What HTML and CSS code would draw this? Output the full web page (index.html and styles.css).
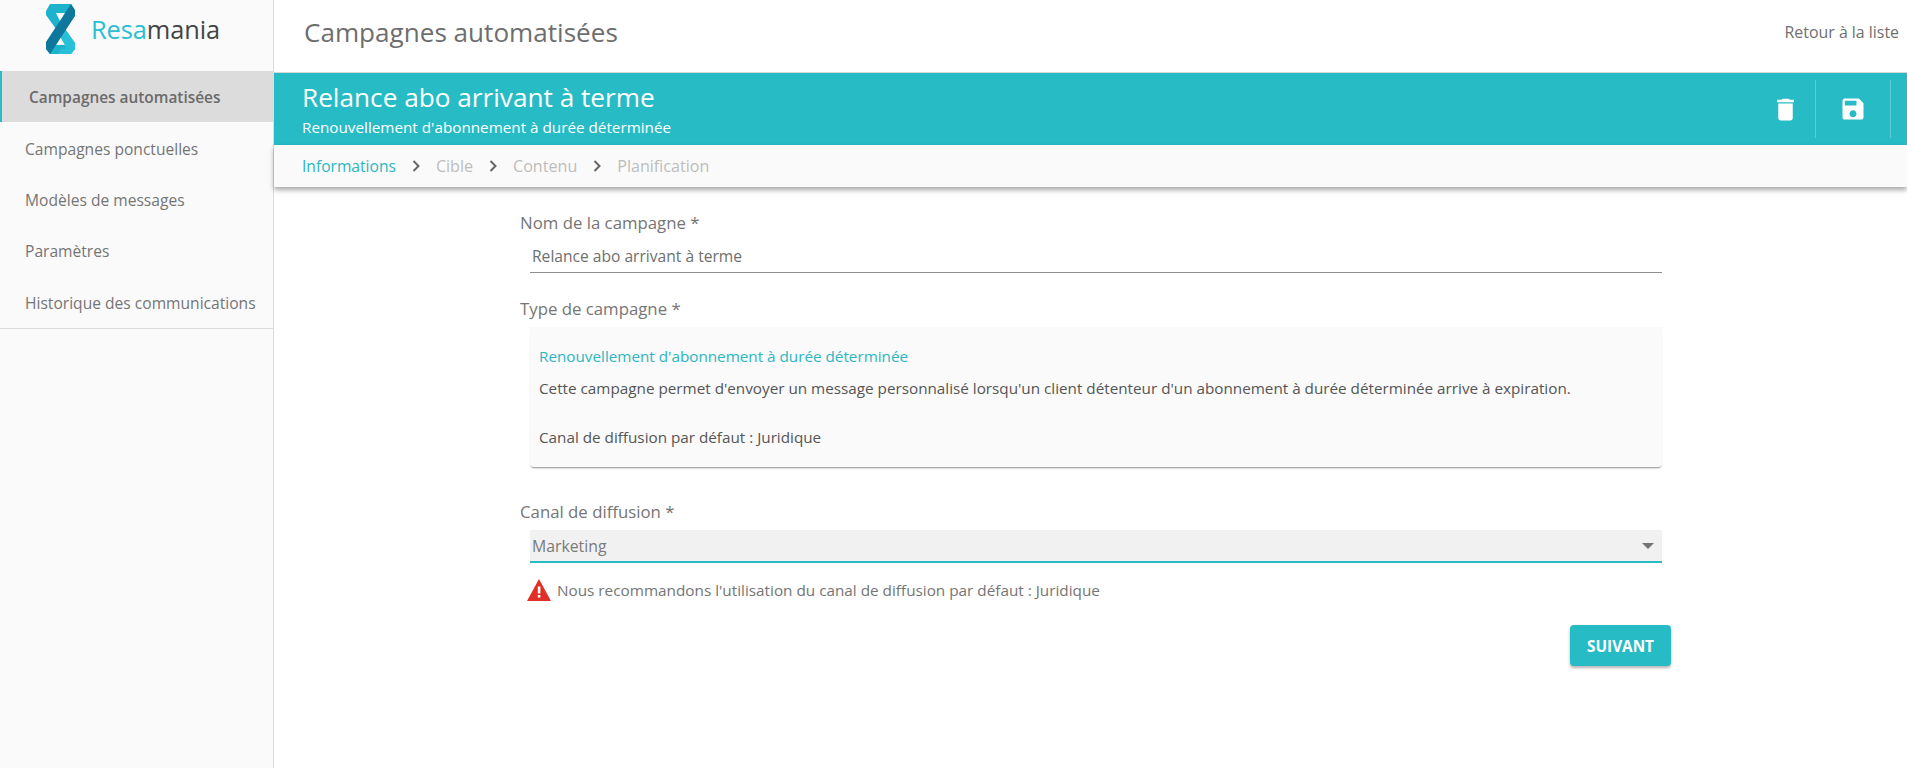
FILE: index.html
```html
<!DOCTYPE html>
<html lang="fr">
<head>
<meta charset="utf-8">
<title>Campagnes automatisées</title>
<link rel="stylesheet" href="styles.css">
</head>
<body>
<div class="app">
  <aside class="sidebar">
    <div class="logo">
      <svg class="logo-mark" width="29" height="50" viewBox="0 0 29 50">
        <path d="M4 0 H25 L29 7 V11 L19 25 L29 39 V45 L25 50 H4 L0 45 V39 L10 25 L0 11 V7 Z M10 9 L14.5 18 L19 9 Z M14.5 33 L10 41 H19 Z" fill="#1db3cd" fill-rule="evenodd"/>
        <path d="M14.5 33 L19 25 L29 39 V45 L25 50 H12 L15 45 H19 V41 Z" fill="#27c0d8"/>
        <path d="M25 0 L29 6 V12 L4 50 L0 45 V38 Z" fill="#0d789b"/>
      </svg>
      <div class="logo-text"><span class="logo-a">Resa</span><span class="logo-b">mania</span></div>
    </div>
    <nav class="nav">
      <a class="nav-item active">Campagnes automatisées</a>
      <a class="nav-item">Campagnes ponctuelles</a>
      <a class="nav-item">Modèles de messages</a>
      <a class="nav-item">Paramètres</a>
      <a class="nav-item">Historique des communications</a>
    </nav>
  </aside>
  <main class="main">
    <header class="topbar">
      <h1 class="page-title">Campagnes automatisées</h1>
      <a class="back">Retour à la liste</a>
    </header>
    <section class="banner">
      <div class="banner-text">
        <div class="banner-title">Relance abo arrivant à terme</div>
        <div class="banner-sub">Renouvellement d'abonnement à durée déterminée</div>
      </div>
      <div class="banner-actions">
        <button class="icon-btn trash" aria-label="Supprimer">
          <svg width="29" height="29" viewBox="0 0 24 24" fill="#fff"><path d="M6 19c0 1.1.9 2 2 2h8c1.1 0 2-.9 2-2V7H6v12zM19 4h-3.5l-1-1h-5l-1 1H5v2h14V4z"/></svg>
        </button>
        <button class="icon-btn save" aria-label="Enregistrer">
          <svg width="28" height="28" viewBox="0 0 24 24" fill="#fff"><path d="M17 3H5c-1.11 0-2 .9-2 2v14c0 1.1.89 2 2 2h14c1.1 0 2-.9 2-2V7l-4-4zm-5 16c-1.66 0-3-1.34-3-3s1.34-3 3-3 3 1.34 3 3-1.34 3-3 3zm3-10H5V5h10v4z"/></svg>
        </button>
      </div>
    </section>
    <div class="steps">
      <span class="step current">Informations</span>
      <svg class="chev" width="8" height="12" viewBox="0 0 8 12"><path d="M1.5 1 L6.5 6 L1.5 11" fill="none" stroke="#666" stroke-width="2"/></svg>
      <span class="step">Cible</span>
      <svg class="chev" width="8" height="12" viewBox="0 0 8 12"><path d="M1.5 1 L6.5 6 L1.5 11" fill="none" stroke="#666" stroke-width="2"/></svg>
      <span class="step">Contenu</span>
      <svg class="chev" width="8" height="12" viewBox="0 0 8 12"><path d="M1.5 1 L6.5 6 L1.5 11" fill="none" stroke="#666" stroke-width="2"/></svg>
      <span class="step">Planification</span>
    </div>
    <form class="form">
      <div class="label first">Nom de la campagne *</div>
      <div class="input">Relance abo arrivant à terme</div>
      <div class="label second">Type de campagne *</div>
      <div class="card">
        <div class="card-title">Renouvellement d'abonnement à durée déterminée</div>
        <p class="card-desc">Cette campagne permet d'envoyer un message personnalisé lorsqu'un client détenteur d'un abonnement à durée déterminée arrive à expiration.</p>
        <p class="card-channel">Canal de diffusion par défaut : Juridique</p>
      </div>
      <div class="label third">Canal de diffusion *</div>
      <div class="select"><span>Marketing</span><i class="caret"></i></div>
      <div class="warning">
        <svg width="24" height="22" viewBox="0 0 24 22"><path d="M12 0 L24 22 H0 Z" fill="#e02f26"/><rect x="10.8" y="7.5" width="2.6" height="7" fill="#fff"/><rect x="10.8" y="16" width="2.6" height="2.6" fill="#fff"/></svg>
        <span>Nous recommandons l'utilisation du canal de diffusion par défaut : Juridique</span>
      </div>
      <div class="actions"><button type="button" class="next">SUIVANT</button></div>
    </form>
  </main>
</div>
</body>
</html>
```
FILE: styles.css
```css
* { box-sizing: border-box; }
html, body { margin: 0; height: 100%; }
body { font-family: "Open Sans", "Noto Sans", sans-serif; color: #6f6f6f; background: #fff; overflow: hidden; }
.app { display: flex; height: 768px; }
.sidebar { width: 274px; flex: none; background: #fafafa; border-right: 1px solid #dcdcdc; }
.logo { height: 71px; display: flex; align-items: flex-start; padding: 4px 0 0 46px; }
.logo-mark { display: block; }
.logo-text { margin: 10px 0 0 16px; font-size: 25.4px; line-height: 30px; letter-spacing: -.1px; }
.logo-a { color: #29bfd2; }
.logo-b { color: #444; }
.nav { border-bottom: 1px solid #dcdcdc; display: flex; flex-direction: column; }
.nav-item { height: 51.4px; display: flex; align-items: center; padding: 1px 0 0 25px; font-size: 15.6px; color: #757575; }
.nav-item.active { background: #dcdcdc; border-left: 2px solid #29bcc6; padding-left: 27px; font-size: 15.4px; font-weight: 600; color: #6b6b6b; }
.main { flex: 1; min-width: 0; display: flex; flex-direction: column; }
.topbar { height: 73px; display: flex; align-items: center; justify-content: space-between; padding: 0 8px 9px 30px; border-bottom: 1px solid #d8d8d8; }
.page-title { margin: 0; font-size: 26.1px; font-weight: 400; color: #6e6e6e; }
.back { font-size: 15.9px; font-weight: 500; color: #6f6f6f; }
.banner { height: 72px; background: #27bbc6; color: #fff; display: flex; justify-content: space-between; padding-left: 28px; }
.banner-text { padding-top: 8px; }
.banner-title { font-size: 26.2px; line-height: 32px; }
.banner-sub { font-size: 15.25px; line-height: 22px; margin-top: 3px; }
.banner-actions { display: flex; align-items: center; padding-right: 16px; }
.icon-btn { height: 58px; border: 0; border-right: 1px solid #5ccdd5; background: transparent; padding: 0; display: flex; align-items: center; justify-content: center; }
.trash { width: 60px; }
.save { width: 75px; }
.steps { height: 42px; background: #fafafa; display: flex; align-items: center; gap: 16px; padding-left: 28px; font-size: 16.1px; color: #bdbdbd; box-shadow: 0 3px 5px rgba(0,0,0,.35); position: relative; }
.step.current { color: #2cb6c2; font-size: 15.6px; }
.form { width: 1151px; margin-left: 246px; }
.label { font-size: 16.8px; line-height: 22px; color: #757575; }
.first { margin-top: 25px; }
.second { margin-top: 25px; }
.third { margin-top: 34px; }
.input { margin: 8px 0 0 10px; width: 1132px; height: 31px; border-bottom: 1px solid #8f8f8f; padding-left: 2px; font-size: 15.6px; line-height: 29px; color: #6f6f6f; }
.card { margin: 7px 0 0 10px; width: 1132px; height: 140px; background: #fafafa; border-radius: 0 0 4px 4px; box-shadow: 0 2px 2px -1px rgba(0,0,0,.45); padding: 18px 9px 0; font-size: 15.25px; color: #555; }
.card-title { color: #2cb6c2; line-height: 22px; }
.card p { margin: 0; line-height: 22px; }
.card-desc { margin-top: 10px !important; }
.card-channel { margin-top: 27px !important; }
.select { margin: 7px 0 0 10px; width: 1132px; height: 33px; background: #f1f1f1; border-bottom: 2px solid #27bbc6; padding: 0 2px; display: flex; align-items: center; justify-content: space-between; font-size: 15.8px; color: #7a7a7a; }
.caret { width: 0; height: 0; border: 6px solid transparent; border-top: 6px solid #757575; border-bottom: 0; margin-right: 6px; }
.warning { display: flex; align-items: center; gap: 6px; margin: 16px 0 0 7px; font-size: 15.3px; color: #757575; height: 22px; }
.actions { display: flex; justify-content: flex-end; margin-top: 24px; }
.next { width: 101px; height: 41px; border: 0; border-radius: 4px; background: #27bbc6; color: #fff; font: 700 15.3px "Open Sans", sans-serif; box-shadow: 0 2px 3px rgba(0,0,0,.3); }
```
